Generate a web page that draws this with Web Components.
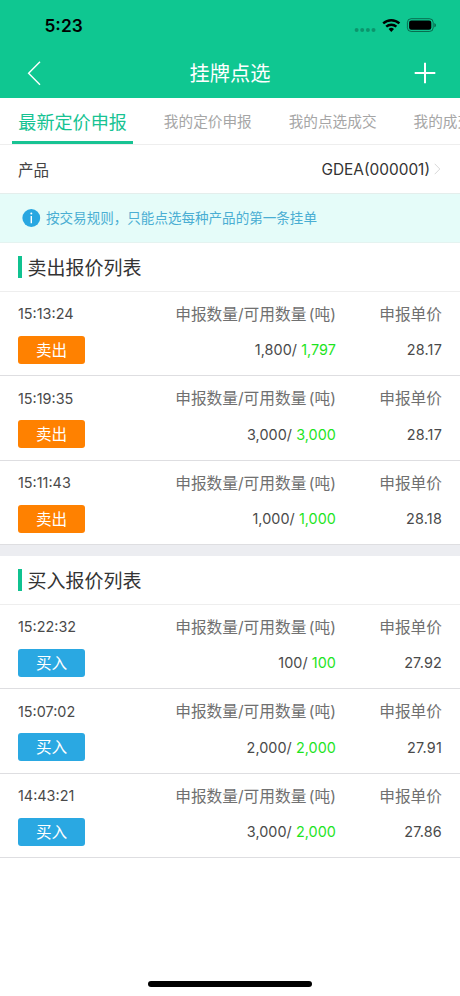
<!DOCTYPE html>
<html lang="zh-CN">
<head>
<meta charset="UTF-8">
<meta name="viewport" content="width=device-width, initial-scale=1.0">
<title>挂牌点选</title>
<style>
    body {
        margin: 0;
        background-color: #fff;
        color: #333;
        font-family: Inter, "Noto Sans CJK SC", sans-serif;
    }
</style>
</head>
<body>
<listing-app>
    <status-bar time="5:23"></status-bar>
    <nav-bar>挂牌点选</nav-bar>
    <tab-bar>
        <tab-item active>最新定价申报</tab-item>
        <tab-item>我的定价申报</tab-item>
        <tab-item>我的点选成交</tab-item>
        <tab-item>我的成交</tab-item>
    </tab-bar>
    <product-row label="产品">GDEA(000001)</product-row>
    <notice-bar>按交易规则，只能点选每种产品的第一条挂单</notice-bar>
    <quote-list heading="卖出报价列表">
        <quote-row type="sell" time="15:13:24" total="1,800" available="1,797" price="28.17"></quote-row>
        <quote-row type="sell" time="15:19:35" total="3,000" available="3,000" price="28.17"></quote-row>
        <quote-row type="sell" time="15:11:43" total="1,000" available="1,000" price="28.18"></quote-row>
    </quote-list>
    <quote-list heading="买入报价列表" separated>
        <quote-row type="buy" time="15:22:32" total="100" available="100" price="27.92"></quote-row>
        <quote-row type="buy" time="15:07:02" total="2,000" available="2,000" price="27.91"></quote-row>
        <quote-row type="buy" time="14:43:21" total="3,000" available="2,000" price="27.86"></quote-row>
    </quote-list>
    <home-indicator></home-indicator>
</listing-app>

<script>
// Base: every component only fills its shadow root
class BaseElement extends HTMLElement {
    constructor() {
        super();
        this.attachShadow({ mode: 'open' });
    }

    connectedCallback() {
        this.shadowRoot.innerHTML = this.render();
    }
}

class ListingApp extends BaseElement {
    render() {
        return `
            <style>
                :host {
                    display: flex;
                    flex-direction: column;
                    height: 996px;
                    overflow: hidden;
                }
            </style>
            <slot></slot>
        `;
    }
}

class StatusBar extends BaseElement {
    render() {
        return `
            <style>
                :host {
                    display: flex;
                    flex: none;
                    align-items: center;
                    justify-content: space-between;
                    box-sizing: border-box;
                    height: 50px;
                    padding: 2px 24px 0 44.5px;
                    background-color: #0fc791;
                    color: #000;
                }
                span {
                    font-size: 17.3px;
                    font-weight: 600;
                    line-height: 20px;
                }
                svg { display: block; }
            </style>
            <span>${this.getAttribute('time')}</span>
            <svg width="82" height="18" viewBox="0 0 82 18">
                <g fill="#000" fill-opacity=".25">
                    <circle cx="2.6" cy="13" r="2"/>
                    <circle cx="8.2" cy="13" r="2"/>
                    <circle cx="13.9" cy="13" r="2"/>
                    <circle cx="19.5" cy="13" r="2"/>
                </g>
                <g fill="none" stroke="#000" stroke-width="2.4">
                    <path d="M29.2 6.4a11.8 11.8 0 0 1 16.2 0"/>
                    <path d="M32.2 9.7a7.5 7.5 0 0 1 10.2 0"/>
                </g>
                <path d="M34.6 12.1a4 4 0 0 1 5.4 0L37.3 15z"/>
                <rect x="53.4" y="1.7" width="25.8" height="12.8" rx="3.8" fill="none" stroke="#000" stroke-opacity=".45"/>
                <rect x="55.1" y="3.5" width="22.2" height="9.2" rx="2.2"/>
                <path d="M80.4 6.1v4.2c2-.8 2-3.4 0-4.2z" fill-opacity=".5"/>
            </svg>
        `;
    }
}

class NavBar extends BaseElement {
    render() {
        return `
            <style>
                :host {
                    display: grid;
                    flex: none;
                    grid-template-columns: 40px 1fr 40px;
                    align-items: center;
                    height: 48px;
                    padding: 0 17px;
                    background-color: #0fc791;
                    color: #fff;
                    font-size: 20.2px;
                    line-height: 46px;
                    text-align: center;
                }
                svg {
                    display: block;
                    fill: none;
                    stroke: #fff;
                }
                .add { justify-self: end; }
            </style>
            <svg width="30" height="30" viewBox="0 0 30 30" stroke-width="1.4"><path d="M23 2.8 11.6 14.3 23 25.8"/></svg>
            <div><slot></slot></div>
            <svg class="add" width="30" height="30" viewBox="0 0 30 30" stroke-width="2"><path d="M1.7 14h20.6M12 3.7v20.6"/></svg>
        `;
    }
}

class TabBar extends BaseElement {
    render() {
        return `
            <style>
                :host {
                    display: flex;
                    flex: none;
                    gap: 24.4px;
                    box-sizing: border-box;
                    height: 47px;
                    padding-left: 12px;
                    overflow: hidden;
                    border-bottom: 1px solid #eee;
                }
            </style>
            <slot></slot>
        `;
    }
}

class TabItem extends BaseElement {
    render() {
        return `
            <style>
                :host {
                    flex: none;
                    box-sizing: border-box;
                    height: 46px;
                    padding: 0 6.3px;
                    color: #a6a6a6;
                    font-size: 14.65px;
                    line-height: 48px;
                    white-space: nowrap;
                }
                :host([active]) {
                    border-bottom: 3px solid #18c393;
                    color: #18c393;
                    font-size: 18.1px;
                }
            </style>
            <slot></slot>
        `;
    }
}

class ProductRow extends BaseElement {
    render() {
        return `
            <style>
                :host {
                    display: flex;
                    flex: none;
                    align-items: center;
                    box-sizing: border-box;
                    height: 48px;
                    padding: 0 19px 0 18px;
                    font-size: 15.5px;
                }
                .label { color: #444; }
                .value {
                    margin-left: auto;
                    font-size: 15.4px;
                }
                svg {
                    margin-left: 4px;
                    fill: none;
                    stroke: #d8d8d8;
                }
            </style>
            <span class="label">${this.getAttribute('label')}</span>
            <span class="value"><slot></slot></span>
            <svg width="7" height="12" viewBox="0 0 7 12"><path d="M.7.8 5.8 6 .7 11.2"/></svg>
        `;
    }
}

class NoticeBar extends BaseElement {
    render() {
        return `
            <style>
                :host {
                    display: flex;
                    flex: none;
                    align-items: center;
                    gap: 5px;
                    box-sizing: border-box;
                    height: 50px;
                    padding-left: 22px;
                    border-top: 1px solid #e4eeec;
                    border-bottom: 1px solid #e4f3f0;
                    background-color: #e5fcf9;
                    color: #4aaed3;
                    font-size: 13.55px;
                }
                span { padding-bottom: 2px; }
            </style>
            <svg width="19" height="19" viewBox="0 0 19 19">
                <circle cx="9.3" cy="9" r="8.9" fill="#29a7e1"/>
                <circle cx="9.3" cy="4.6" r="1" fill="#fff"/>
                <path d="M9.3 6.9v7.3" stroke="#fff" stroke-width="1.4"/>
            </svg>
            <span><slot></slot></span>
        `;
    }
}

class QuoteList extends BaseElement {
    render() {
        return `
            <style>
                :host {
                    display: block;
                    flex: none;
                }
                :host([separated]) { border-top: 11.5px solid #ecedf1; }
                header {
                    display: flex;
                    align-items: center;
                    gap: 6px;
                    box-sizing: border-box;
                    height: 48.5px;
                    padding-left: 18px;
                    border-bottom: 1px solid #eee;
                    font-size: 19px;
                }
                header::before {
                    content: '';
                    width: 3.5px;
                    height: 22px;
                    background-color: #10c290;
                }
            </style>
            <header>${this.getAttribute('heading')}</header>
            <slot></slot>
        `;
    }
}

class QuoteRow extends BaseElement {
    render() {
        const label = this.getAttribute('type') === 'sell' ? '卖出' : '买入';
        return `
            <style>
                :host {
                    display: grid;
                    grid-template-columns: 67px 1fr 106px;
                    grid-template-rows: 36px 36px;
                    align-items: center;
                    box-sizing: border-box;
                    height: 84.5px;
                    padding: 4px 18px 0;
                    border-bottom: 1px solid #dedee1;
                    color: #4a4a4a;
                    font-size: 14.4px;
                }
                .right { text-align: right; }
                .label {
                    padding-bottom: .8px;
                    color: #707070;
                    font-size: 15.7px;
                }
                .unit { margin-left: 2.5px; }
                .number { letter-spacing: .05px; }
                .price { letter-spacing: .2px; }
                button {
                    height: 28px;
                    padding: 0;
                    border: 0;
                    border-radius: 3px;
                    background-color: #ff8100;
                    color: #fff;
                    font: inherit;
                    font-size: 15.6px;
                    line-height: 30px;
                }
                :host([type="buy"]) button { background-color: #2aa8e2; }
                em {
                    color: #1ee41e;
                    font-style: normal;
                }
            </style>
            <span>${this.getAttribute('time')}</span>
            <span class="label right">申报数量/可用数量<span class="unit">(吨)</span></span>
            <span class="label right">申报单价</span>
            <button>${label}</button>
            <span class="number right">${this.getAttribute('total')}/ <em>${this.getAttribute('available')}</em></span>
            <span class="price right">${this.getAttribute('price')}</span>
        `;
    }
}

class HomeIndicator extends BaseElement {
    render() {
        return `
            <style>
                :host {
                    flex: none;
                    width: 164px;
                    height: 6px;
                    margin: auto auto 9px;
                    border-radius: 3px;
                    background-color: #000;
                }
            </style>
        `;
    }
}

customElements.define('listing-app', ListingApp);
customElements.define('status-bar', StatusBar);
customElements.define('nav-bar', NavBar);
customElements.define('tab-bar', TabBar);
customElements.define('tab-item', TabItem);
customElements.define('product-row', ProductRow);
customElements.define('notice-bar', NoticeBar);
customElements.define('quote-list', QuoteList);
customElements.define('quote-row', QuoteRow);
customElements.define('home-indicator', HomeIndicator);
</script>
</body>
</html>
